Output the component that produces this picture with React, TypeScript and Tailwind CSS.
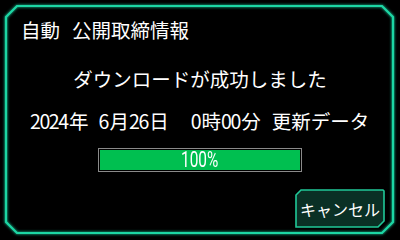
import React from "react";

const font = { fontFamily: '"Noto Sans CJK JP", "Noto Sans", sans-serif' };

function Frame() {
  return (
    <svg className="absolute inset-0 pointer-events-none" width={400} height={240} viewBox="0 0 400 240">
      <defs>
        <filter id="glow" x="-10%" y="-10%" width="120%" height="120%">
          <feGaussianBlur stdDeviation="1.5" result="b" />
          <feMerge>
            <feMergeNode in="b" />
            <feMergeNode in="SourceGraphic" />
          </feMerge>
        </filter>
      </defs>
      <polygon
        points="17,6 382,6 393,17 393,222 382,233 17,233 6,222 6,17"
        fill="none"
        stroke="#1ed6a4"
        strokeWidth={2.2}
        filter="url(#glow)"
      />
    </svg>
  );
}

function CancelButton() {
  return (
    <div className="relative w-[90px] h-[39px] flex items-center justify-center">
      <svg className="absolute inset-0" width={90} height={39} viewBox="0 0 90 39">
        <polygon
          points="6,1 88,1 89,2 89,32 83,38 1,38 1,6"
          fill="#0a3025"
          stroke="#20c898"
          strokeWidth={1.6}
        />
      </svg>
      <span className="relative text-white text-[16px] leading-none" style={font}>
        キャンセル
      </span>
    </div>
  );
}

function D({ children }: { children: React.ReactNode }) {
  return <span className="tracking-[-1.4px] pr-[1.4px]">{children}</span>;
}

export default function App() {
  return (
    <div className="relative w-[400px] h-[240px] bg-black overflow-hidden text-white" style={font}>
      <Frame />
      <div className="flex flex-col h-full">
        <div className="pl-[21px] pt-[18px] text-[19.5px] leading-[24px] flex">
          <span>自動</span>
          <span className="ml-[12px]">公開取締情報</span>
        </div>
        <div className="mt-[25px] text-center text-[19.5px] leading-[24px]">ダウンロードが成功しました</div>
        <div className="mt-[18px] pl-[30px] text-[19.5px] leading-[24px] flex whitespace-nowrap">
          <span><D>2024</D>年</span>
          <span className="ml-[10px]"><D>6</D>月<D>26</D>日</span>
          <span className="ml-[22px]"><D>0</D>時<D>00</D>分</span>
          <span className="ml-[11px]">更新データ</span>
        </div>
        <div className="mt-[15px] flex justify-center">
          <div className="w-[204px] h-[24px] border border-[#8a8a8a] p-[1px] bg-black">
            <div className="w-full h-full bg-[#00bf50] flex items-center justify-center">
              <span
                className="text-[22px] leading-none scale-x-[0.7] inline-block"
                style={{ fontFamily: '"Roboto", "Liberation Sans", sans-serif' }}
              >
                100%
              </span>
            </div>
          </div>
        </div>
        <div className="mt-[17px] flex justify-end pr-[15px]">
          <CancelButton />
        </div>
      </div>
    </div>
  );
}
